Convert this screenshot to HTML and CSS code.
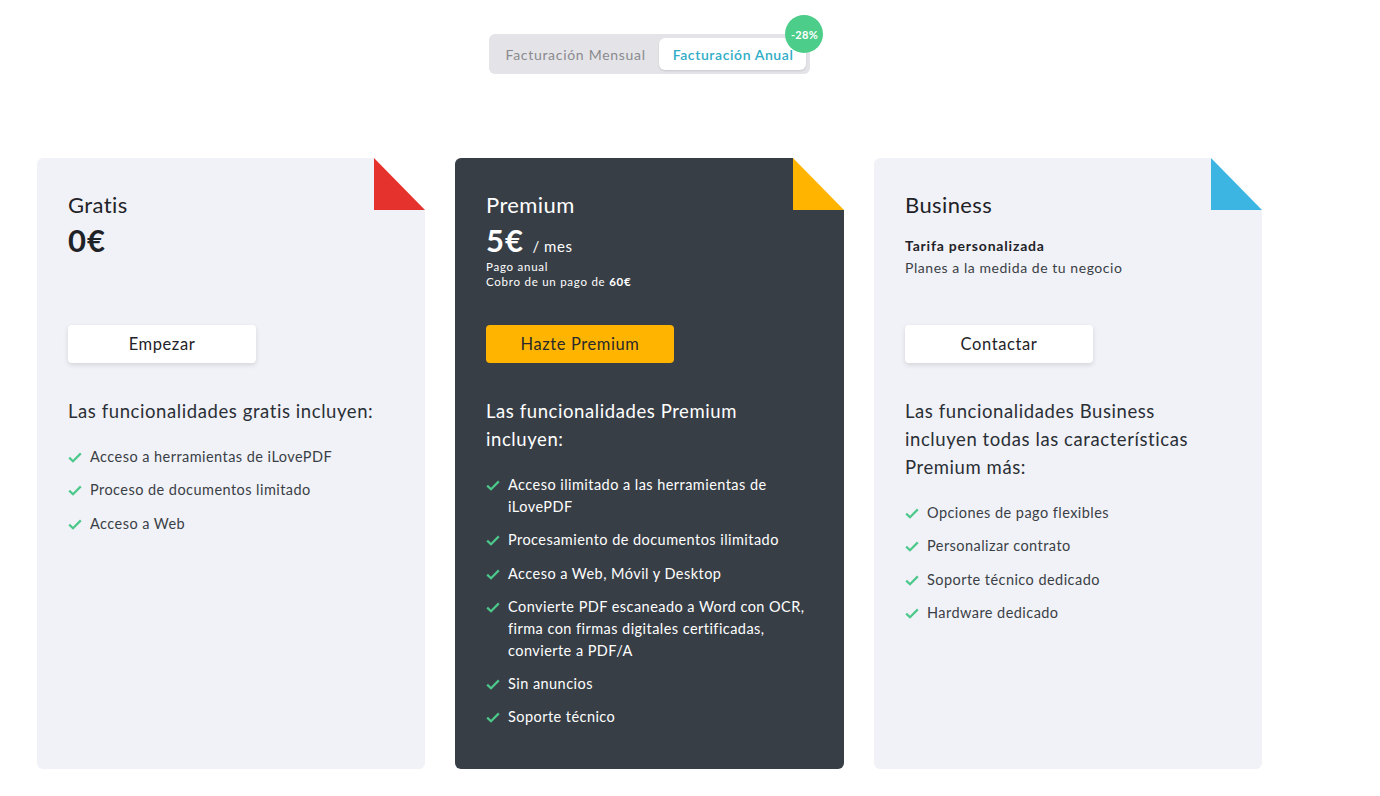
FILE: index.html
```html
<!DOCTYPE html>
<html lang="es">
<head>
<meta charset="utf-8">
<title>Precios</title>
<link rel="stylesheet" href="styles.css">
</head>
<body>
<div class="page">
  <div class="toggle-row">
    <div class="toggle">
      <span class="opt">Facturación Mensual</span>
      <span class="opt active">Facturación Anual</span>
      <span class="badge">-28%</span>
    </div>
  </div>

  <div class="cards">
    <div class="card light">
      <span class="corner red"></span>
      <div class="head">
        <div class="title">Gratis</div>
        <div class="price">0€</div>
      </div>
      <a class="btn white">Empezar</a>
      <div class="feat-title">Las funcionalidades gratis incluyen:</div>
      <ul class="list">
        <li><svg class="chk" viewBox="0 0 14 11"><path d="M1.2 5.6 5 9.2 12.8 1.4"/></svg><span>Acceso a herramientas de iLovePDF</span></li>
        <li><svg class="chk" viewBox="0 0 14 11"><path d="M1.2 5.6 5 9.2 12.8 1.4"/></svg><span>Proceso de documentos limitado</span></li>
        <li><svg class="chk" viewBox="0 0 14 11"><path d="M1.2 5.6 5 9.2 12.8 1.4"/></svg><span>Acceso a Web</span></li>
      </ul>
    </div>

    <div class="card dark">
      <span class="corner yellow"></span>
      <div class="head">
        <div class="title">Premium</div>
        <div class="price">5€ <span class="per">/ mes</span></div>
        <div class="small">Pago anual</div>
        <div class="small">Cobro de un pago de <b>60€</b></div>
      </div>
      <a class="btn yellow-btn">Hazte Premium</a>
      <div class="feat-title">Las funcionalidades Premium incluyen:</div>
      <ul class="list">
        <li><svg class="chk" viewBox="0 0 14 11"><path d="M1.2 5.6 5 9.2 12.8 1.4"/></svg><span>Acceso ilimitado a las herramientas de iLovePDF</span></li>
        <li><svg class="chk" viewBox="0 0 14 11"><path d="M1.2 5.6 5 9.2 12.8 1.4"/></svg><span>Procesamiento de documentos ilimitado</span></li>
        <li><svg class="chk" viewBox="0 0 14 11"><path d="M1.2 5.6 5 9.2 12.8 1.4"/></svg><span>Acceso a Web, Móvil y Desktop</span></li>
        <li><svg class="chk" viewBox="0 0 14 11"><path d="M1.2 5.6 5 9.2 12.8 1.4"/></svg><span>Convierte PDF escaneado a Word con OCR, firma con firmas digitales certificadas, convierte a PDF/A</span></li>
        <li><svg class="chk" viewBox="0 0 14 11"><path d="M1.2 5.6 5 9.2 12.8 1.4"/></svg><span>Sin anuncios</span></li>
        <li><svg class="chk" viewBox="0 0 14 11"><path d="M1.2 5.6 5 9.2 12.8 1.4"/></svg><span>Soporte técnico</span></li>
      </ul>
    </div>

    <div class="card light">
      <span class="corner blue"></span>
      <div class="head">
        <div class="title">Business</div>
        <div class="biz-strong">Tarifa personalizada</div>
        <div class="biz-sub">Planes a la medida de tu negocio</div>
      </div>
      <a class="btn white">Contactar</a>
      <div class="feat-title">Las funcionalidades Business incluyen todas las características Premium más:</div>
      <ul class="list">
        <li><svg class="chk" viewBox="0 0 14 11"><path d="M1.2 5.6 5 9.2 12.8 1.4"/></svg><span>Opciones de pago flexibles</span></li>
        <li><svg class="chk" viewBox="0 0 14 11"><path d="M1.2 5.6 5 9.2 12.8 1.4"/></svg><span>Personalizar contrato</span></li>
        <li><svg class="chk" viewBox="0 0 14 11"><path d="M1.2 5.6 5 9.2 12.8 1.4"/></svg><span>Soporte técnico dedicado</span></li>
        <li><svg class="chk" viewBox="0 0 14 11"><path d="M1.2 5.6 5 9.2 12.8 1.4"/></svg><span>Hardware dedicado</span></li>
      </ul>
    </div>
  </div>
</div>
</body>
</html>
```

FILE: styles.css
```css
* { box-sizing: border-box; }
html, body { margin: 0; padding: 0; background: #fff; }
body {
  font-family: "Lato", "Open Sans", "Liberation Sans", sans-serif;
  color: #383e45;
}
.page {
  width: 1225px;
  margin-left: 37px;
  padding-top: 34px;
}
.toggle-row {
  display: flex;
  justify-content: center;
}
.toggle {
  position: relative;
  display: flex;
  align-items: center;
  height: 40px;
  padding: 4px 4px 4px 0;
  background: #e4e4e8;
  border-radius: 6px;
}
.opt {
  font-size: 14px;
  letter-spacing: 0.7px;
  color: #8a8a8e;
  padding: 0 13px 0 17px;
}
.opt.active {
  height: 32px;
  display: flex;
  align-items: center;
  padding: 0 13px 0 14px;
  background: #fff;
  color: #30adc7;
  font-weight: 600;
  letter-spacing: 0.6px;
  border-radius: 6px;
  box-shadow: 0 1px 2px rgba(0,0,0,0.12);
}
.badge {
  position: absolute;
  right: -13px;
  top: -19px;
  width: 38px;
  height: 38px;
  border-radius: 50%;
  background: #4ccd8a;
  color: #fff;
  font-size: 11px;
  font-weight: 700;
  letter-spacing: 0.3px;
  display: flex;
  align-items: center;
  justify-content: center;
}
.cards {
  display: flex;
  gap: 30px;
  margin-top: 84px;
}
.card {
  position: relative;
  width: 388px;
  height: 611px;
  border-radius: 6px;
  padding: 35px 31px 0 31px;
}
.card.light { background: #f1f2f7; }
.card.dark { background: #383e46; color: #fff; }
.card:nth-child(2) { width: 389px; }
.corner {
  position: absolute;
  top: -1px;
  right: -1px;
  width: 52px;
  height: 53px;
  background: #fff;
}
.corner::after {
  content: "";
  position: absolute;
  left: 0;
  top: 1px;
  width: 51px;
  height: 52px;
  clip-path: polygon(0 0, 0 100%, 100% 100%);
}
.corner.red::after { background: #e5322d; }
.corner.yellow::after { background: #ffb500; }
.corner.blue::after { background: #3cb5e3; }
.head {
  height: 132px;
}
.title {
  font-size: 22px;
  line-height: 24px;
  letter-spacing: 0.4px;
  color: #1f2328;
}
.dark .title { color: #fff; }
.price {
  font-size: 31px;
  font-weight: 700;
  line-height: 30px;
  letter-spacing: 1px;
  margin-top: 8px;
  color: #1f2328;
}
.dark .price { color: #fff; }
.per {
  font-size: 15px;
  font-weight: 400;
  letter-spacing: 0.5px;
  margin-left: 0;
}
.small {
  font-size: 11.5px;
  line-height: 15px;
  letter-spacing: 0.75px;
}
.dark .price + .small { margin-top: -2px; }
.small b { font-weight: 700; }
.biz-strong {
  font-size: 14px;
  font-weight: 700;
  margin-top: 19px;
  line-height: 20px;
  letter-spacing: 0.8px;
  color: #1f2328;
}
.biz-sub {
  font-size: 14px;
  line-height: 24px;
  letter-spacing: 0.55px;
  color: #3a3f46;
}
.btn {
  display: flex;
  align-items: center;
  justify-content: center;
  width: 188px;
  height: 38px;
  border-radius: 4px;
  font-size: 16.5px;
  letter-spacing: 0.6px;
  color: #1f2328;
  cursor: pointer;
}
.btn.white {
  background: #fff;
  box-shadow: 0 2px 5px rgba(0,0,0,0.12);
}
.btn.yellow-btn {
  background: #ffb500;
  color: #2a2a2a;
}
.feat-title {
  margin-top: 34px;
  max-width: 318px;
  font-size: 18.5px;
  line-height: 28px;
  letter-spacing: 0.58px;
  color: #2a2f36;
}
.dark .feat-title { color: #fff; }
.list {
  list-style: none;
  margin: 21px 0 0 0;
  padding: 0;
}
.list li {
  display: flex;
  align-items: flex-start;
  font-size: 14.5px;
  line-height: 22px;
  letter-spacing: 0.45px;
  margin-bottom: 11.3px;
  color: #3a3f46;
}
.dark .list li { color: #fff; }
.chk {
  flex: none;
  width: 14px;
  height: 11px;
  margin-top: 6px;
  margin-right: 8px;
  fill: none;
  stroke: #4cc98a;
  stroke-width: 2.2;
}
```
